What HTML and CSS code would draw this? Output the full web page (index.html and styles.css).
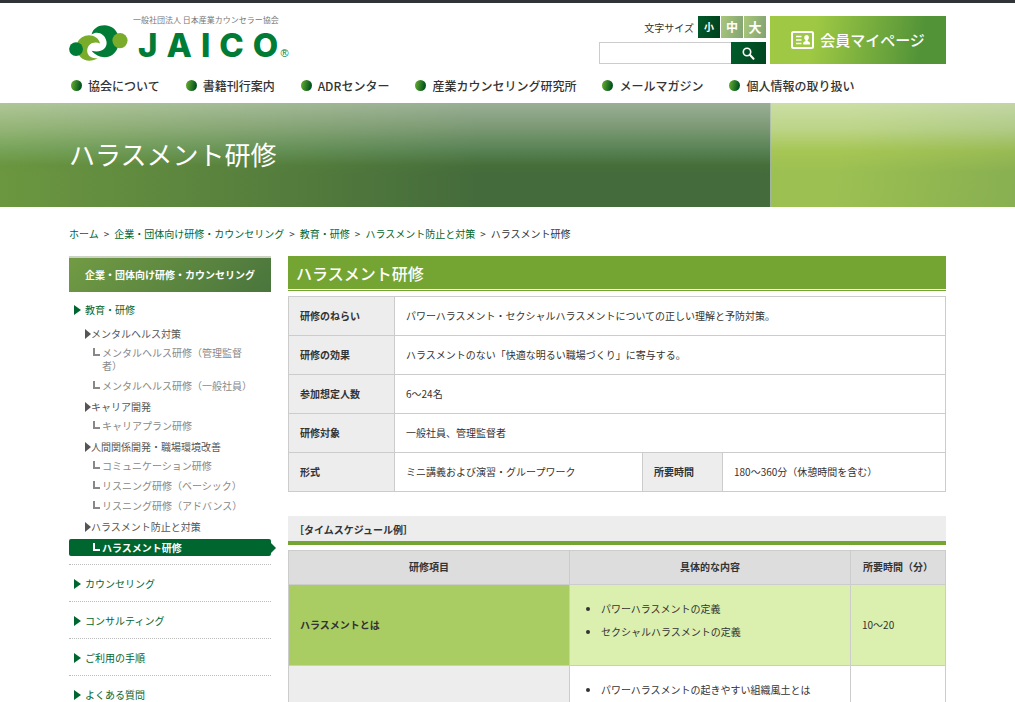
FILE: index.html
```html
<!DOCTYPE html>
<html lang="ja">
<head>
<meta charset="utf-8">
<meta name="viewport" content="width=device-width, initial-scale=1">
<title>ハラスメント研修 | JAICO</title>
<link rel="stylesheet" href="styles.css">
</head>
<body>
<header class="site-header">
  <div class="container header-top">
    <a class="logo" href="#">
      <svg class="logo-mark" viewBox="26 74 176 112" aria-hidden="true">
        <path fill="#7aac2b" d="M119 130C112 98 62 95 49 130C44 180 84 192 112 174C90 178 78 164 80 149C82 131 100 122 119 130Z"/>
        <circle cx="46" cy="147" r="21" fill="#007c36"/>
        <path fill="#007c36" stroke="#fff" stroke-width="3" paint-order="stroke" d="M93 103C101 64 173 62 176 120C175 178 119 184 93 152C124 160 142 143 138 123C133 99 109 91 93 103Z"/>
        <circle cx="179" cy="121" r="23" fill="#7aac2b"/>
      </svg>
      <span class="logo-words">
        <span class="logo-sub">一般社団法人 日本産業カウンセラー協会</span>
        <span class="logo-name"><span>J</span><span>A</span><span>I</span><span>C</span><span>O</span><small>®</small></span>
      </span>
    </a>
    <div class="tools">
      <div class="font-size">
        <span class="font-label">文字サイズ</span>
        <button class="size-btn size-small" type="button">小</button>
        <button class="size-btn size-medium" type="button">中</button>
        <button class="size-btn size-large" type="button">大</button>
      </div>
      <form class="search">
        <input class="search-input" type="text" aria-label="サイト内検索">
        <button class="search-btn" type="button" aria-label="検索">
          <svg width="13" height="13" viewBox="0 0 13 13" fill="none" stroke="#fff" aria-hidden="true"><circle cx="5" cy="5" r="3.7" stroke-width="1.6"/><path d="M7.8 7.8L11.5 11.8" stroke-width="2" stroke-linecap="round"/></svg>
        </button>
      </form>
    </div>
    <a class="member" href="#">
      <svg width="23" height="18" viewBox="0 0 23 18" aria-hidden="true">
        <rect x="1" y="1" width="21" height="16" rx="1.5" fill="none" stroke="#fff" stroke-width="2"/>
        <path d="M5 5.5h5.5M5 9h5.5M5 12.5h5.5" stroke="#fff" stroke-width="1.6"/>
        <path fill="#fff" d="M15.5 4a2.4 2.4 0 0 1 2.4 2.5c0 1.2-.5 2-1.2 2.5v1.2c1.3.5 2.3.8 2.3 1.8v1.5h-6.8V12c0-1 1-1.300 2.200-1.800V9c-.7-.5-1.200-1.300-1.200-2.500A2.400 2.400 0 0 1 15.500 4Z"/>
      </svg>
      <span>会員マイページ</span>
    </a>
  </div>
  <nav class="container global-nav">
    <a href="#">協会について</a>
    <a href="#">書籍刊行案内</a>
    <a href="#">ADRセンター</a>
    <a href="#">産業カウンセリング研究所</a>
    <a href="#">メールマガジン</a>
    <a href="#">個人情報の取り扱い</a>
  </nav>
</header>

<div class="hero">
  <div class="container"><h1>ハラスメント研修</h1></div>
</div>

<nav class="container breadcrumb" aria-label="パンくず">
  <a href="#">ホーム</a><span>&gt;</span>
  <a href="#">企業・団体向け研修・カウンセリング</a><span>&gt;</span>
  <a href="#">教育・研修</a><span>&gt;</span>
  <a href="#">ハラスメント防止と対策</a><span>&gt;</span>
  <span>ハラスメント研修</span>
</nav>

<div class="container columns">
  <aside class="sidebar">
    <h2 class="side-title">企業・団体向け研修・カウンセリング</h2>
    <div class="side-group">
      <a class="side-main" href="#">教育・研修</a>
      <a class="side-sub" href="#">メンタルヘルス対策</a>
      <a class="side-item" href="#">メンタルヘルス研修（管理監督者）</a>
      <a class="side-item" href="#">メンタルヘルス研修（一般社員）</a>
      <a class="side-sub" href="#">キャリア開発</a>
      <a class="side-item" href="#">キャリアプラン研修</a>
      <a class="side-sub" href="#">人間関係開発・職場環境改善</a>
      <a class="side-item" href="#">コミュニケーション研修</a>
      <a class="side-item" href="#">リスニング研修（ベーシック）</a>
      <a class="side-item" href="#">リスニング研修（アドバンス）</a>
      <a class="side-sub" href="#">ハラスメント防止と対策</a>
      <a class="side-item current" href="#">ハラスメント研修</a>
    </div>
    <div class="side-group"><a class="side-main" href="#">カウンセリング</a></div>
    <div class="side-group"><a class="side-main" href="#">コンサルティング</a></div>
    <div class="side-group"><a class="side-main" href="#">ご利用の手順</a></div>
    <div class="side-group"><a class="side-main" href="#">よくある質問</a></div>
  </aside>

  <main class="content">
    <h2 class="section-title">ハラスメント研修</h2>
    <table class="info">
      <colgroup><col class="col-label"><col class="col-value"><col class="col-label2"><col></colgroup>
      <tr><th scope="row">研修のねらい</th><td colspan="3">パワーハラスメント・セクシャルハラスメントについての正しい理解と予防対策。</td></tr>
      <tr><th scope="row">研修の効果</th><td colspan="3">ハラスメントのない「快適な明るい職場づくり」に寄与する。</td></tr>
      <tr><th scope="row">参加想定人数</th><td colspan="3">6～24名</td></tr>
      <tr><th scope="row">研修対象</th><td colspan="3">一般社員、管理監督者</td></tr>
      <tr><th scope="row">形式</th><td>ミニ講義および演習・グループワーク</td><th scope="row">所要時間</th><td>180～360分（休憩時間を含む）</td></tr>
    </table>

    <h3 class="schedule-title">［タイムスケジュール例］</h3>
    <table class="schedule">
      <colgroup><col class="col-topic"><col class="col-detail"><col></colgroup>
      <thead>
        <tr><th scope="col">研修項目</th><th scope="col">具体的な内容</th><th scope="col">所要時間（分）</th></tr>
      </thead>
      <tbody>
        <tr class="accent">
          <th scope="row">ハラスメントとは</th>
          <td><ul><li>パワーハラスメントの定義</li><li>セクシャルハラスメントの定義</li></ul></td>
          <td>10～20</td>
        </tr>
        <tr>
          <th scope="row"></th>
          <td><ul><li>パワーハラスメントの起きやすい組織風土とは</li></ul></td>
          <td></td>
        </tr>
      </tbody>
    </table>
  </main>
</div>
</body>
</html>
```
FILE: styles.css
```css
* { box-sizing: border-box; }

body {
  margin: 0;
  height: 100vh;
  overflow: hidden;
  border-top: 3px solid #303338;
  background: #fff;
  color: #333;
  font-family: "Noto Sans CJK JP", sans-serif;
  font-size: 10px;
  line-height: 13px;
}

a { color: inherit; text-decoration: none; }
h1, h2, h3, ul { margin: 0; padding: 0; }
button { border: 0; padding: 0; font-family: inherit; color: #fff; }

.container { width: calc(100% - 32px); max-width: 877px; margin: 0 auto; }

/* Header */
.site-header { padding-top: 13px; }
.header-top { display: flex; gap: 4px; height: 48px; }

.logo { display: flex; gap: 4px; margin-right: auto; }
.logo-mark { width: 59px; height: 37px; margin-top: 9px; }
.logo-sub { display: block; color: #777; font-size: 8px; line-height: 8px; padding-left: 1px; }
.logo-name {
  display: flex;
  align-items: flex-end;
  gap: 9px;
  padding: 5px 0 0 6px;
  color: #007c36;
  font-family: Inter, sans-serif;
  font-size: 33px;
  font-weight: 800;
  line-height: 32px;
}
.logo-name small { margin-left: -7px; font-family: "Liberation Sans", sans-serif; font-size: 11px; font-weight: 400; line-height: 16px; }

.tools { display: flex; flex-direction: column; gap: 4px; width: 167px; }
.font-size { display: flex; justify-content: flex-end; align-items: center; gap: 1px; }
.font-label { margin-right: 3px; }
.size-btn { width: 22px; height: 22px; font-weight: 700; line-height: 22px; }
.size-small { background: linear-gradient(100deg, #00592a, #00401c); font-size: 10px; }
.size-medium { background: linear-gradient(100deg, #a9c779, #82a274); font-size: 12px; }
.size-large { background: linear-gradient(100deg, #a9c779, #82a274); font-size: 13px; }

.search { display: flex; height: 22px; }
.search-input { flex: 1; min-width: 0; border: 1px solid #ccc; border-right: 0; background: #fff; }
.search-btn {
  display: flex;
  align-items: center;
  justify-content: center;
  width: 35px;
  background: linear-gradient(100deg, #005c2b, #00461f);
}

.member {
  display: flex;
  align-items: center;
  justify-content: center;
  gap: 6px;
  width: 176px;
  background: linear-gradient(100deg, #9fc944 25%, #529338 85%);
  color: #fff;
  font-size: 15px;
  font-weight: 500;
  line-height: 20px;
}

.global-nav {
  display: flex;
  gap: 26px;
  padding: 12px 0 8px 2px;
  font-size: 12px;
  font-weight: 500;
  line-height: 19px;
}
.global-nav a { display: flex; align-items: center; gap: 6px; white-space: nowrap; }
.global-nav a::before {
  content: "";
  width: 11px;
  height: 11px;
  border-radius: 50%;
  background: linear-gradient(100deg, #60a62e 10%, #00531f 85%);
}

/* Hero */
.hero {
  display: flex;
  align-items: center;
  height: 104px;
  padding-bottom: 3px;
  color: #fff;
  background:
    linear-gradient(to bottom, rgba(255, 255, 255, .46) 0%, rgba(225, 238, 222, .34) 25%, rgba(150, 200, 160, .25) 45%, rgba(90, 140, 60, .1) 60%, rgba(90, 140, 60, 0) 68%) 0 0 / calc(50% + 263px) 100% no-repeat,
    linear-gradient(to right, #6c9740 0%, #446b3b 62%) 0 0 / calc(50% + 263px) 100% no-repeat,
    linear-gradient(to bottom, rgba(255, 255, 255, .48) 0%, rgba(240, 246, 220, .38) 25%, rgba(190, 212, 90, .3) 46%, rgba(160, 190, 60, 0) 66%) 100% 0 / calc(50% - 263px) 100% no-repeat,
    linear-gradient(100deg, #9cc052 30%, #88af51 100%) 100% 0 / calc(50% - 263px) 100% no-repeat;
}
.hero h1 { font-size: 26px; font-weight: 400; line-height: 36px; }

.breadcrumb { display: flex; flex-wrap: wrap; gap: 5px; padding: 20px 0 16px; }
.breadcrumb a { color: #006630; }

.columns { display: flex; align-items: flex-start; gap: 17px; }

/* Sidebar */
.sidebar { flex: 0 0 202px; }
.side-title {
  padding: 10px 0 11px;
  border-top: 2px solid #ccd3c4;
  background: linear-gradient(135deg, #719b43, #4a753d);
  color: #fff;
  font-size: 10px;
  font-weight: 700;
  text-align: center;
}
.side-group { padding: 12px 0 11px; border-bottom: 1px dotted #bbb; }
.side-group:first-of-type { padding: 11px 0 8px; }
.side-main { display: flex; align-items: center; gap: 4px; padding-left: 5px; color: #006630; }
.side-main::before { content: ""; border: solid transparent; border-width: 5px 0 5px 7px; border-left-color: #006630; }
.side-sub { display: flex; align-items: center; padding: 4px 0 3px 16px; color: #555; }
.side-main + .side-sub { margin-top: 7px; }
.side-sub::before { content: ""; border: solid transparent; border-width: 5px 0 5px 6px; border-left-color: #555; }
.side-item { display: flex; gap: 2px; padding: 3px 20px 4px 24px; color: #888; }
.side-item::before { content: ""; flex: 0 0 5px; height: 6px; margin-top: 2px; border: solid #888; border-width: 0 0 2px 2px; }
.side-item.current {
  position: relative;
  margin-top: 3px;
  padding-top: 2px;
  padding-bottom: 2px;
  border-radius: 2px;
  background: #006630;
  color: #fff;
  font-weight: 700;
}
.side-item.current::before { border-color: #fff; }
.side-item.current::after {
  content: "";
  position: absolute;
  top: 4px;
  left: 100%;
  border: solid transparent;
  border-width: 5px 0 5px 5px;
  border-left-color: #006630;
}

/* Main column */
.content { flex: 1; min-width: 0; }
.section-title {
  padding: 4px 8px;
  background: linear-gradient(#74a532, #74a532) 0 0 / 100% 33px no-repeat, linear-gradient(#74a532, #74a532) 0 100% / 100% 1px no-repeat;
  color: #fff;
  font-size: 16px;
  font-weight: 500;
  line-height: 27px;
}

table { width: 100%; border-collapse: collapse; table-layout: fixed; }
th, td { border: 1px solid #ccc; padding: 0 11px 2px; text-align: left; }
th { background: #ededed; font-weight: 700; }

.info { margin-top: 5px; }
.info td, .info th { height: 39px; }
.col-label { width: 106px; }
.col-value { width: 248px; }
.col-label2 { width: 80px; }

.schedule-title {
  margin-top: 24px;
  padding: 7px 6px 5px;
  border-bottom: 4px solid #74a532;
  background: #ededed;
  font-size: 10px;
  font-weight: 700;
}
.schedule { margin-top: 5px; }
.col-topic, .col-detail { width: 281px; }
.schedule thead th { height: 34px; background: #ddd; text-align: center; }
.schedule tbody td, .schedule tbody th { height: 81px; }
.schedule tbody td { vertical-align: middle; }
.schedule ul { padding: 0 0 8px 20px; line-height: 23px; }
.schedule tbody tr:last-child td { padding-top: 12px; vertical-align: top; }
.schedule tbody .accent th { background: #a9cd63; }
.schedule tbody .accent td { background: #dbefae; }
```
